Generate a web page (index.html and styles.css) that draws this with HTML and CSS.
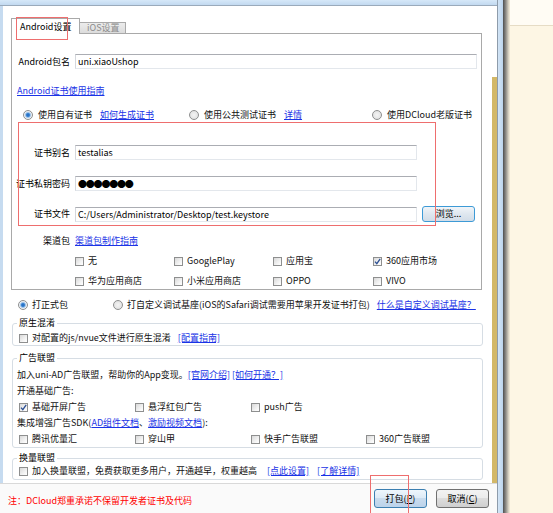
FILE: index.html
```html
<!DOCTYPE html>
<html lang="zh">
<head>
<meta charset="utf-8">
<title>Android设置</title>
<link rel="stylesheet" href="styles.css">
</head>
<body>
<div class="screen">
  <div class="window">
    <div class="titlebar"></div>
    <div class="body">
      <div class="lframe"></div>
      <div class="main">
        <div class="tabs">
          <div class="tab active">Android设置</div>
          <div class="tab idle">iOS设置</div>
          <div class="tab-fill"></div>
        </div>
        <div class="panel">
          <div class="field">
            <span class="lbl">Android包名</span>
            <div class="in w-pkg">uni.xiaoUshop</div>
          </div>
          <div class="guide"><a class="lk">Android证书使用指南</a></div>
          <div class="certtype">
            <div class="opt"><span class="rb on"></span><span>使用自有证书</span><a class="lk after">如何生成证书</a></div>
            <div class="opt"><span class="rb"></span><span>使用公共测试证书</span><a class="lk after">详情</a></div>
            <div class="opt"><span class="rb"></span><span>使用DCloud老版证书</span></div>
          </div>
          <div class="field m-alias">
            <span class="lbl">证书别名</span>
            <div class="in w-cert">testalias</div>
          </div>
          <div class="field m-key">
            <span class="lbl">证书私钥密码</span>
            <div class="in w-cert"><span class="pw">●●●●●●●</span></div>
          </div>
          <div class="field m-file">
            <span class="lbl">证书文件</span>
            <div class="in w-cert">C:/Users/Administrator/Desktop/test.keystore</div>
            <div class="browse">浏览...</div>
          </div>
          <div class="field chhead">
            <span class="lbl">渠道包</span>
            <a class="lk">渠道包制作指南</a>
          </div>
          <div class="chgrid ch1">
            <div class="ck"><span class="cb"></span><span>无</span></div>
            <div class="ck"><span class="cb"></span><span>GooglePlay</span></div>
            <div class="ck"><span class="cb"></span><span>应用宝</span></div>
            <div class="ck"><span class="cb"><svg viewBox="0 0 7 7" width="7" height="7"><path d="M1 3.6 L2.8 5.6 L6.2 0.8" fill="none" stroke="#2c4f93" stroke-width="1.3"/></svg></span><span>360应用市场</span></div>
          </div>
          <div class="chgrid ch2">
            <div class="ck"><span class="cb"></span><span>华为应用商店</span></div>
            <div class="ck"><span class="cb"></span><span>小米应用商店</span></div>
            <div class="ck"><span class="cb"></span><span>OPPO</span></div>
            <div class="ck"><span class="cb"></span><span>VIVO</span></div>
          </div>
        </div>

        <div class="build">
          <div class="opt"><span class="rb on"></span><span>打正式包</span></div>
          <div class="opt"><span class="rb"></span><span>打自定义调试基座(iOS的Safari调试需要用苹果开发证书打包)</span><a class="lk after2">什么是自定义调试基座？</a></div>
        </div>

        <fieldset class="grp g1">
          <legend>原生混淆</legend>
          <div class="ck line pad"><span class="cb"></span><span>对配置的js/nvue文件进行原生混淆</span><a class="lk after">[配置指南]</a></div>
        </fieldset>

        <fieldset class="grp g2">
          <legend>广告联盟</legend>
          <div class="line">加入uni-AD广告联盟，帮助你的App变现。<a class="lk">[官网介绍]</a> <a class="lk">[如何开通？]</a></div>
          <div class="line">开通基础广告:</div>
          <div class="adgrid line">
            <div class="ck"><span class="cb"><svg viewBox="0 0 7 7" width="7" height="7"><path d="M1 3.6 L2.8 5.6 L6.2 0.8" fill="none" stroke="#2c4f93" stroke-width="1.3"/></svg></span><span>基础开屏广告</span></div>
            <div class="ck"><span class="cb"></span><span>悬浮红包广告</span></div>
            <div class="ck"><span class="cb"></span><span>push广告</span></div>
          </div>
          <div class="line">集成增强广告SDK(<a class="lk">AD组件文档</a>、<a class="lk">激励视频文档</a>):</div>
          <div class="adgrid line">
            <div class="ck"><span class="cb"></span><span>腾讯优量汇</span></div>
            <div class="ck"><span class="cb"></span><span>穿山甲</span></div>
            <div class="ck"><span class="cb"></span><span>快手广告联盟</span></div>
            <div class="ck"><span class="cb"></span><span>360广告联盟</span></div>
          </div>
        </fieldset>

        <fieldset class="grp g3">
          <legend>换量联盟</legend>
          <div class="ck line pad"><span class="cb"></span><span>加入换量联盟，免费获取更多用户，开通越早，权重越高</span><a class="lk after3">[点此设置]</a><a class="lk after4">[了解详情]</a></div>
        </fieldset>
      </div>
      <div class="gold"></div>
    </div>
    <div class="footer">
      <div class="note">注：DCloud郑重承诺不保留开发者证书及代码</div>
      <div class="btn def">打包(<u>P</u>)</div>
      <div class="btn">取消(<u>C</u>)</div>
    </div>
  </div>
  <div class="rframe"></div>
  <div class="shadow"></div>
  <div class="desk"><div class="desk-top"></div></div>

  <div class="mark m1"></div>
  <div class="mark m2"></div>
  <div class="mark m3"></div>
</div>
</body>
</html>
```

FILE: styles.css
```css
* { box-sizing: border-box; }
html, body { margin: 0; padding: 0; }
body {
  font-family: "Noto Sans CJK SC", "Noto Sans", sans-serif;
  font-size: 9px;
  line-height: 12px;
  color: #111;
  background: #fdf6e4;
}
.screen {
  position: relative;
  display: flex;
  width: 553px;
  height: 513px;
  overflow: hidden;
}
.window {
  width: 497px;
  height: 513px;
  display: flex;
  flex-direction: column;
  background: #fff;
}
.titlebar {
  height: 6px;
  background: linear-gradient(#d6e8f8, #c2d9f0);
  border-bottom: 1px solid #9aaabb;
}
.body {
  height: 477px;
  display: flex;
}
.lframe {
  width: 11px;
  border-left: 3px solid #c6dbf0;
  background: #fff;
}
.main {
  width: 481px;
  padding-top: 12px;
}
.gold {
  width: 5px;
  margin-top: 71px;
  background: #d3b868;
}

/* tabs */
.tabs {
  display: flex;
  align-items: flex-end;
  height: 16px;
}
.tab {
  white-space: nowrap;
}
.tab.active {
  width: 69px;
  height: 16px;
  border: 1px solid #a9a9a9;
  border-bottom: none;
  background: #fff;
  padding: 2px 0 0 8px;
  color: #000;
}
.tab.idle {
  width: 46px;
  height: 12px;
  border: 1px solid #a9a9a9;
  border-left: none;
  background: linear-gradient(#ececec, #dcdcdc);
  color: #8c8c8c;
  padding-left: 7px;
  line-height: 10px;
}
.tab-fill {
  width: 356px;
  height: 1px;
  background: #a9a9a9;
}

.panel {
  width: 471px;
  height: 256px;
  border: 1px solid #a9a9a9;
  border-top: none;
  padding-top: 20px;
}
.field {
  display: flex;
  align-items: center;
  gap: 5px;
  height: 15px;
}
.lbl {
  width: 58px;
  flex: none;
  text-align: right;
  white-space: nowrap;
  color: #000;
}
.in {
  height: 15px;
  border: 1px solid #e3e7ec;
  border-top-color: #abadb3;
  border-left-color: #d4d7dc;
  padding: 0 2px;
  line-height: 13px;
  white-space: nowrap;
  overflow: hidden;
  color: #000;
  background: #fff;
}
.w-pkg { width: 402px; }
.w-cert { width: 342px; }
.pw {
  font-size: 9px;
  letter-spacing: -1.2px;
}
.m-alias { margin-top: 24px; }
.m-key { margin-top: 16px; }
.m-file { margin-top: 15px; height: 16px; }
.browse {
  width: 53px;
  height: 16px;
  border: 1px solid #3d9ad6;
  border-radius: 3px;
  background: linear-gradient(#f1f5f9, #dfe7ef 50%, #d2dde8);
  display: flex;
  align-items: center;
  justify-content: center;
  color: #000;
}
.lk {
  color: #1a33e6;
  text-decoration: underline;
  white-space: nowrap;
}
.guide {
  margin-top: 16px;
  padding-left: 5px;
  height: 12px;
}
.certtype {
  margin-top: 12px;
  height: 12px;
  display: grid;
  grid-template-columns: 166px 183px auto;
  padding-left: 11px;
}
.opt {
  display: flex;
  align-items: center;
  gap: 5px;
  white-space: nowrap;
}
.lk.after { margin-left: 3px; }
.lk.after3 { margin-left: 6px; }
.lk.after4 { margin-left: 4px; }

.chhead { margin-top: 13px; height: 12px; }
.chgrid {
  display: grid;
  grid-template-columns: 99px 99px 100px auto;
  padding-left: 63px;
  height: 12px;
}
.ch1 { margin-top: 8px; }
.ch2 { margin-top: 8px; }

.ck {
  display: flex;
  align-items: center;
  gap: 4px;
  white-space: nowrap;
}
.cb {
  flex: none;
  width: 9px;
  height: 9px;
  border: 1px solid #8e8f8f;
  background: linear-gradient(135deg, #d9d9d9, #f6f6f6 70%, #fff);
  display: flex;
  align-items: center;
  justify-content: center;
}
.cb svg { display: block; }
.rb {
  flex: none;
  width: 10px;
  height: 10px;
  border-radius: 50%;
  border: 1px solid #8e8f8f;
  background: radial-gradient(circle at 50% 50%, #f4f4f4 0, #dcdcdc 100%);
}
.rb.on {
  background: radial-gradient(circle at 50% 50%, #1d63b7 0, #3d86d4 1.6px, #a9c8e8 2.6px, #eef3f8 3.6px, #dadada 100%);
}

.build {
  margin-top: 9px;
  height: 12px;
  display: grid;
  grid-template-columns: 95px auto;
  padding-left: 7px;
}
.build .opt { gap: 4px; }
.build .lk.after2 { margin-left: 3px; }

/* group boxes */
fieldset.grp {
  margin: 6px 0 0 1px;
  width: 471px;
  min-width: 0;
  border: 1px solid #d6dde4;
  border-radius: 3px;
  padding: 3px 4px 1px 4px;
}
legend {
  padding: 0 2px;
  line-height: 12px;
  color: #000;
}
.line {
  white-space: nowrap;
}
.pad { padding-left: 2px; }
.g1 .line { height: 12px; }
fieldset.g2 { padding-bottom: 0; }
.g2 .line { height: 16px; line-height: 16px; }
.adgrid {
  display: grid;
  grid-template-columns: 116px 116px 115px auto;
  padding-left: 2px;
}
fieldset.g3 { margin-top: 4px; padding-top: 0; }
.g3 .line { height: 14px; }

/* footer */
.footer {
  height: 30px;
  border-top: 1px solid #d9d9d9;
  background: #fafafa;
  display: flex;
  align-items: center;
  gap: 9px;
  padding: 0 8px;
}
.note {
  flex: 1;
  color: #f00;
  margin-top: 4px;
  white-space: nowrap;
}
.btn {
  width: 53px;
  height: 19px;
  border: 1px solid #707070;
  border-radius: 3px;
  background: linear-gradient(#f3f3f3, #ebebeb 50%, #dddddd 50%, #cfcfcf);
  display: flex;
  align-items: center;
  justify-content: center;
  color: #000;
  white-space: nowrap;
}
.btn.def {
  border-color: #3c7fb1;
  background: linear-gradient(#eef6fc, #dceaf6 50%, #c9dcee 50%, #bcd3ea);
}
.btn u { text-decoration: underline; }

/* window frame & desktop */
.rframe {
  width: 6px;
  border-left: 1px solid #8e9cab;
  background: linear-gradient(90deg, #d3e5f6, #bcd4ec);
}
.shadow {
  width: 7px;
  background: linear-gradient(90deg, #4e4e4e, #8e8c87 40%, #d9d3c4 80%, #f6eedb);
}
.desk {
  flex: 1;
  background: #fdf6e4;
}
.desk-top {
  height: 26px;
  background: #fffcf4;
  border-bottom: 1px solid #e6dcc5;
}

/* red annotation boxes */
.mark {
  position: absolute;
  border: 1px solid #ee6e6e;
  pointer-events: none;
}
.m1 { left: 16px; top: 17px; width: 52px; height: 23px; }
.m2 { left: 18px; top: 122px; width: 418px; height: 104px; }
.m3 { left: 370px; top: 475px; width: 39px; height: 42px; }
```
